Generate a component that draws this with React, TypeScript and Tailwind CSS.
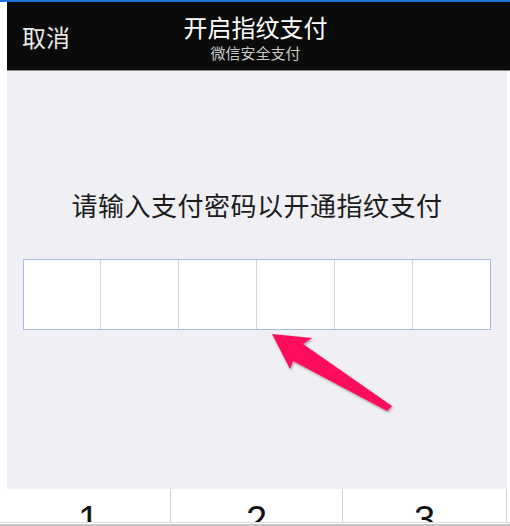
const cells = [0, 1, 2, 3, 4, 5]
const keys = [
  { k: '1', w: 'w-[164px]' },
  { k: '2', w: 'flex-1' },
  { k: '3', w: 'w-[164px]' },
]

export default function App() {
  return (
    <div
      className="relative w-[510px] h-[526px] overflow-hidden bg-white flex flex-col"
      style={{ fontFamily: '"Noto Sans CJK SC", "Liberation Sans", sans-serif' }}
    >
      <div className="h-[2px] bg-[#1e72d6]" />

      <div className="flex-1 pl-[7px] flex flex-col min-h-0">
        {/* Header */}
        <div className="h-[68px] bg-[#0b0b0b] border-b border-[#8c8c8c] box-content flex items-center relative">
          <span className="ml-[15px] mt-[2px] text-[24px] leading-none text-[#e8e8e8]">取消</span>
          <div className="absolute inset-0 flex flex-col items-center pt-[13px] pr-[6px]">
            <span className="text-[24px] leading-[24px] text-white">开启指纹支付</span>
            <span className="text-[15px] leading-[15px] text-[#c9c9c9] mt-[6px]">微信安全支付</span>
          </div>
        </div>

        {/* Body */}
        <div className="mr-[3px] h-[418px] bg-[#efeff4] flex flex-col items-center">
          <p className="mt-[118px] text-[26px] leading-[32px] text-[#1c1c1c] tracking-[0.5px]">
            请输入支付密码以开通指纹支付
          </p>
          <div className="mt-[38px] ml-[-1px] w-[468px] h-[71px] bg-white border border-[#a9b9e2] flex">
            {cells.map((i) => (
              <div key={i} className={`flex-1 ${i < 5 ? 'border-r border-[#d4d4da]' : ''}`} />
            ))}
          </div>
        </div>

        {/* Keypad */}
        <div className="flex-1 mr-[3px] flex bg-white overflow-hidden">
          {keys.map(({ k, w }) => (
            <div key={k} className={`${w} flex justify-center pt-[12px] border-r border-[#d2d2d2]`}>
              <span
                className="text-[38px] leading-[38px] text-[#111]"
                style={{ fontFamily: '"Liberation Sans", sans-serif' }}
              >
                {k}
              </span>
            </div>
          ))}
        </div>
      </div>

      <div className="h-[1px] bg-[#dedede]" />
      <div className="h-[1px] bg-white" />
      <div className="h-[2px] bg-[#c6c6c6]" />

      {/* annotation arrow */}
      <svg
        className="absolute inset-0 pointer-events-none"
        width="510"
        height="526"
        viewBox="0 0 510 526"
      >
        <defs>
          <filter id="sh" x="-20%" y="-20%" width="140%" height="140%">
            <feDropShadow dx="1" dy="1.5" stdDeviation="1" floodColor="#000" floodOpacity="0.35" />
          </filter>
        </defs>
        <polygon
          points="272,334 312,338 303,344 392,406 387,411 293,361 290,369"
          fill="#fd0f5b"
          filter="url(#sh)"
        />
      </svg>
    </div>
  )
}
